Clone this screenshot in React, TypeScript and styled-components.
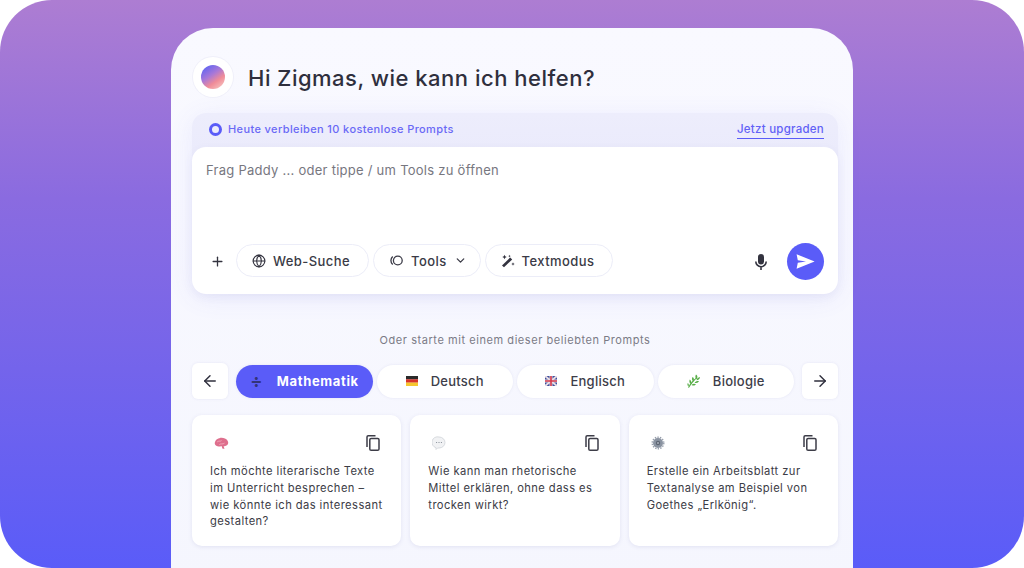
import React from "react";
import styled, { createGlobalStyle } from "styled-components";
import { ArrowLeft, ArrowRight, ChevronDown, Globe, Plus } from "lucide-react";

const Global = createGlobalStyle`
  html, body { margin: 0; padding: 0; background: #fff; }
  body { font-family: "Inter", "Liberation Sans", sans-serif; overflow: hidden; }
  * { box-sizing: border-box; }
`;

const Frame = styled.div`
  width: 1024px; height: 568px; border-radius: 52px; overflow: hidden;
  background: linear-gradient(180deg, #ad7dd2 0%, #8a6be0 35%, #5a5cf8 100%);
  padding: 28px 171px 0;
`;
const Panel = styled.main`
  width: 682px; height: 560px; border-radius: 42px 42px 0 0;
  background: linear-gradient(180deg, #f9f9ff 0%, #f5f6fe 100%);
  padding: 29px 15px 0 21px;
`;
const Header = styled.header`
  display: flex; align-items: center; gap: 15px; height: 40px; margin-left: 1px;
`;
const Avatar = styled.div`
  width: 40px; height: 40px; border-radius: 50%; background: #fff;
  box-shadow: 0 0 0 1px #f0f0fa; display: flex; align-items: center; justify-content: center;
`;
const Orb = styled.div`
  width: 24px; height: 24px; border-radius: 50%; filter: blur(.6px);
  background: linear-gradient(145deg, #6b68ee 15%, #a878d8 42%, #f08c98 66%, #f8d2ca 100%);
`;
const Title = styled.h1`
  margin: 0; padding-top: 1px; font-size: 22px; line-height: 40px; font-weight: 500; color: #2f2f3d; letter-spacing: .5px;
`;
const Composer = styled.section`
  margin-top: 16px; border-radius: 14px;
  background: linear-gradient(180deg, #ededfc 0%, #e3e3fa 100%);
  box-shadow: 0 4px 26px rgba(90, 92, 248, .09);
`;
const Notice = styled.div`
  height: 34px; display: flex; align-items: center; padding: 0 14px 2px 17px; color: #6a69f6;
`;
const Ring = styled.span`
  width: 13px; height: 13px; border-radius: 50%; border: 3px solid #5a5cf8; margin-right: 6px;
`;
const NoticeText = styled.span`
  font-size: 11px; font-weight: 500; letter-spacing: .38px; flex: 1;
`;
const Upgrade = styled.a`
  font-size: 11.5px; font-weight: 500; line-height: 18px; letter-spacing: .25px;
  border-bottom: 1px solid #5a5cf8; color: #6261f6;
`;
const InputBox = styled.div`
  height: 147px; border-radius: 14px; background: #fff; padding: 14px;
  display: flex; flex-direction: column; justify-content: space-between;
  box-shadow: 0 3px 10px rgba(80, 80, 160, .07);
`;
const Placeholder = styled.div`
  font-size: 13px; line-height: 18px; color: #77777f; letter-spacing: .26px;
`;
const Tools = styled.div`
  display: flex; align-items: center; gap: 4px;
`;
const PlusButton = styled.span`
  width: 26px; padding-left: 4px; display: flex; color: #33333f;
`;
const ToolPill = styled.button<{ $end?: number }>`
  height: 33px; margin-bottom: 2px; padding: 0 ${p => p.$end ?? 18}px 0 15px; border: 1px solid #ecedf8; border-radius: 17px; background: #fff;
  display: flex; align-items: center; gap: 7px; font: 500 13px "Inter", sans-serif; letter-spacing: .42px; color: #3a3a46;
`;
const Spacer = styled.div`flex: 1;`;
const MicWrap = styled.span`
  display: flex; margin-right: 14px;
`;
const SendButton = styled.button`
  width: 37px; height: 37px; border: 0; border-radius: 50%; background: #5a5cf8;
  display: flex; align-items: center; justify-content: center; padding: 0;
`;
const Hint = styled.p`
  margin: 38px 0 0; text-align: center; font-size: 11px; line-height: 16px; color: #7b7b86; letter-spacing: .56px;
`;
const Subjects = styled.nav`
  margin-top: 15px; display: flex; align-items: center; gap: 4px;
`;
const Arrow = styled.button<{ $right?: boolean }>`
  width: 36px; height: 36px; flex: none; border: 0; border-radius: 6px; background: #fff; color: #2f2f3d;
  display: flex; align-items: center; justify-content: center; padding: 0;
  margin: ${p => (p.$right ? "0 0 0 4px" : "0 4px 0 0")};
  box-shadow: 0 0 3px rgba(80, 80, 160, .1);
`;
const Subject = styled.button<{ $active?: boolean }>`
  flex: 1; height: 33px; border: 0; border-radius: 17px; padding: 0;
  display: flex; align-items: center; justify-content: center; gap: 13px;
  background: ${p => (p.$active ? "#5a5cf8" : "#fff")}; color: ${p => (p.$active ? "#fff" : "#3d3d49")};
  font: ${p => (p.$active ? 700 : 500)} 13px "Inter", sans-serif; letter-spacing: ${p => (p.$active ? ".65px" : ".25px")};
  box-shadow: 0 0 3px rgba(80, 80, 160, .1);
`;
const Divide = styled.span`
  width: 14px; color: #33337a; font-size: 18px; line-height: 18px; font-weight: 700; text-align: center;
`;
const Cards = styled.div`
  margin-top: 16px; display: grid; grid-template-columns: repeat(3, 1fr); gap: 9px;
`;
const Card = styled.article`
  height: 131px; border-radius: 10px; background: #fff; padding: 14px 18px 0;
  box-shadow: 0 1px 4px rgba(80, 80, 160, .12);
`;
const CardTop = styled.div`
  display: flex; justify-content: space-between; align-items: center; height: 28px; padding: 0 3px 0 4px;
`;
const CardText = styled.p`
  margin: 6px 0 0; font-size: 11.2px; line-height: 16.8px; font-weight: 400; color: #3c3c46; letter-spacing: .42px;
`;

const ToolsIcon = () => (
  <svg width="15" height="15" viewBox="0 0 15 15" fill="none" stroke="#3a3a46" strokeWidth="1.3">
    <circle cx="8.8" cy="7.5" r="4.4" />
    <path d="M3.7 3.4a5.6 5.6 0 0 0 0 8.2" />
  </svg>
);
const MagicIcon = () => (
  <svg width="14" height="14" viewBox="0 0 14 14" fill="#33333f">
    <path d="M3 13.2 1 11.400 9.200 3.500l2 1.900z" />
    <path d="M3.500 .8l.7 1.500 1.500.7-1.500.7-.7 1.500-.7-1.500L1.300 3l1.500-.7zM12 8.300l.5 1.200 1.200.5-1.200.5-.5 1.200-.5-1.200-1.200-.5 1.200-.5zM8.500 .8l.4.9.900.4-.900.4-.4.900-.4-.900-.9-.4.9-.4z" />
  </svg>
);
const MicIcon = () => (
  <svg width="16" height="18" viewBox="0 0 16 18" fill="none">
    <rect x="5" y="1" width="6" height="10.500" rx="3" fill="#33333f" />
    <path d="M2.800 8.500a5.200 5.200 0 0 0 10.400 0M8 13.700V17" stroke="#33333f" strokeWidth="1.600" />
  </svg>
);
const SendIcon = () => (
  <svg width="19" height="15" viewBox="0 0 19 15">
    <path d="M.6.300 18.600 7.500.6 14.700 1.800 8.700 10 7.500 1.800 6.300z" fill="#fff" />
  </svg>
);
const CopyIcon = () => (
  <svg width="14" height="16" viewBox="0 0 14 16" fill="none" stroke="#3d3d48" strokeWidth="1.500">
    <rect x="3.800" y="3.500" width="9.200" height="11.700" rx="1.300" />
    <path d="M1 12V2.100C1 1.400 1.500 .8 2.200 .8H9.500" />
  </svg>
);
const Flag = ({ kind }: { kind: "de" | "uk" }) =>
  kind === "de" ? (
    <svg width="12" height="10" viewBox="0 0 12 10">
      <rect width="12" height="3.400" fill="#2a2a2a" />
      <rect y="3.300" width="12" height="3.400" fill="#d8322a" />
      <rect y="6.600" width="12" height="3.400" fill="#f6c62e" />
    </svg>
  ) : (
    <svg width="12" height="10" viewBox="0 0 12 10">
      <rect width="12" height="10" rx="1.500" fill="#3d4f9c" />
      <path d="M0 0l12 10M12 0L0 10" stroke="#e8dce4" strokeWidth="2" />
      <path d="M6 0v10M0 5h12" stroke="#e8dce4" strokeWidth="3" />
      <path d="M6 0v10M0 5h12" stroke="#d33a4c" strokeWidth="1.600" />
    </svg>
  );
const Leaf = () => (
  <svg width="13" height="14" viewBox="0 0 13 14" fill="#57ad47">
    <path d="M1 13.500C3 9 6 6 9.500 3.500l.4.500C7 6.800 4.500 10 2 13.800z" />
    <path d="M9 .5c1.800 1 1.900 3.200.4 4.700C8.200 4 8 2.300 9 .5zM13 3c0 2-1.400 3.200-3.500 3.200C10 4.500 11.200 3.400 13 3zM5.500 3c1.700.9 1.900 3 .8 4.500C4.900 6.300 4.600 4.700 5.500 3zM12 7c-.6 1.800-2.500 2.400-4.400 1.700C8.500 7.300 10.200 6.700 12 7zM2.800 5.500c1.600 1.200 1.800 2.800.9 4.400C2.300 8.800 2 7.200 2.800 5.500zM9 10.300c-1.200 1.500-3 1.500-4.400.6C5.800 9.600 7.500 9.500 9 10.300zM.8 9c1.100.9 1.300 2.100.7 3.500C.4 11.700.2 10.400.8 9z" />
  </svg>
);
const Brain = () => (
  <svg width="15" height="13" viewBox="0 0 14 12">
    <path d="M.8 6.500C.3 4 2.500 1.300 5 1c2.500-.7 6-.2 7.700 2.500 1.200 2 .5 4-1.500 4.700-.8.400-1.500.400-2.200.300l.8 2.500-1.800-.2L7 8.300C4.500 9.300 1.300 8.800.8 6.500z" fill="#de6f8d" />
    <path d="M3 4.500c1.500-1.300 3-.2 4-1.200M5 7c1.500-1.200 3 0 4.800-1.300" stroke="#f3b0c0" strokeWidth=".8" fill="none" />
  </svg>
);
const Bubble = () => (
  <svg width="14" height="14" viewBox="0 0 14 14">
    <path d="M7 1a6 5.500 0 0 1 0 11H5.500L4 13.500V11.700A5.500 5.500 0 0 1 7 1z" fill="#f1f2f4" stroke="#cfd3d8" strokeWidth=".8" />
    <circle cx="4.600" cy="6.500" r=".6" fill="#7e8690" />
    <circle cx="7" cy="6.500" r=".6" fill="#7e8690" />
    <circle cx="9.400" cy="6.500" r=".6" fill="#7e8690" />
  </svg>
);
const Gear = () => (
  <svg width="14" height="14" viewBox="0 0 14 14">
    <circle cx="7" cy="7" r="5" fill="#8a93a1" />
    <circle cx="7" cy="7" r="5.800" fill="none" stroke="#98a0ad" strokeWidth="1.400" strokeDasharray="1.400 1.200" />
    <circle cx="7" cy="7" r="2.200" fill="#5d6572" />
    <circle cx="7" cy="7" r="1" fill="#aab0bb" />
  </svg>
);

const prompts = [
  { icon: <Brain />, text: "Ich möchte literarische Texte im Unterricht besprechen – wie könnte ich das interessant gestalten?" },
  { icon: <Bubble />, text: "Wie kann man rhetorische Mittel erklären, ohne dass es trocken wirkt?" },
  { icon: <Gear />, text: "Erstelle ein Arbeitsblatt zur Textanalyse am Beispiel von Goethes „Erlkönig“." },
];

export default function App() {
  return (
    <Frame>
      <Global />
      <Panel>
        <Header>
          <Avatar><Orb /></Avatar>
          <Title>Hi Zigmas, wie kann ich helfen?</Title>
        </Header>
        <Composer>
          <Notice>
            <Ring />
            <NoticeText>Heute verbleiben 10 kostenlose Prompts</NoticeText>
            <Upgrade>Jetzt upgraden</Upgrade>
          </Notice>
          <InputBox>
            <Placeholder>Frag Paddy ... oder tippe / um Tools zu öffnen</Placeholder>
            <Tools>
              <PlusButton><Plus size={15} strokeWidth={2.1} /></PlusButton>
              <ToolPill><Globe size={14} strokeWidth={1.9} color="#33333f" />Web-Suche</ToolPill>
              <ToolPill $end={13}><ToolsIcon />Tools<ChevronDown size={13} strokeWidth={2.4} /></ToolPill>
              <ToolPill><MagicIcon />Textmodus</ToolPill>
              <Spacer />
              <MicWrap><MicIcon /></MicWrap>
              <SendButton><SendIcon /></SendButton>
            </Tools>
          </InputBox>
        </Composer>
        <Hint>Oder starte mit einem dieser beliebten Prompts</Hint>
        <Subjects>
          <Arrow><ArrowLeft size={18} strokeWidth={1.9} /></Arrow>
          <Subject $active><Divide>÷</Divide>Mathematik</Subject>
          <Subject><Flag kind="de" />Deutsch</Subject>
          <Subject><Flag kind="uk" />Englisch</Subject>
          <Subject><Leaf />Biologie</Subject>
          <Arrow $right><ArrowRight size={18} strokeWidth={1.9} /></Arrow>
        </Subjects>
        <Cards>
          {prompts.map(p => (
            <Card key={p.text}>
              <CardTop>{p.icon}<CopyIcon /></CardTop>
              <CardText>{p.text}</CardText>
            </Card>
          ))}
        </Cards>
      </Panel>
    </Frame>
  );
}
